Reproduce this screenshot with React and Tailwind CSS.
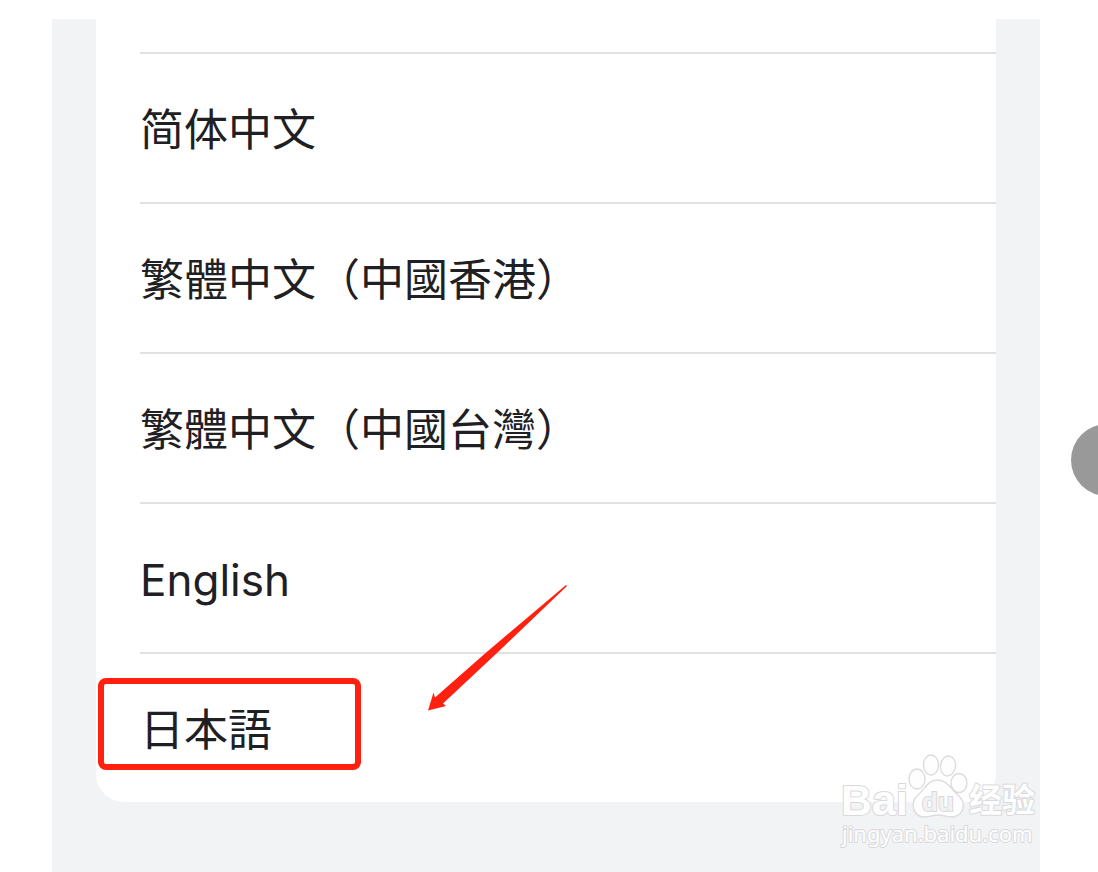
import React, { useState } from 'react';

const LANGUAGES = [
  { code: 'zh-CN', label: '简体中文' },
  { code: 'zh-HK', label: '繁體中文（中國香港）' },
  { code: 'zh-TW', label: '繁體中文（中國台灣）' },
  { code: 'en', label: 'English' },
  { code: 'ja', label: '日本語' },
];

function Arrow() {
  return (
    <svg
      className="absolute left-[288px] -top-[69px] w-[140px] h-[128px] pointer-events-none"
      viewBox="0 0 140 128"
      aria-hidden="true"
    >
      <path
        d="M138 0 L139 1 L70 67 L15 118.5 L18 121 L0 125.5 L5.5 107.5 L7 112.5 L57 68.5 Z"
        fill="#ff2010"
      />
    </svg>
  );
}

function Watermark() {
  return (
    <svg
      className="absolute right-0 bottom-[20px] w-[200px] h-[100px] pointer-events-none"
      viewBox="0 0 200 100"
      role="img"
      aria-label="Baidu 经验"
    >
      <g fill="#fefefe" stroke="#dcdcde" strokeWidth="1.4" strokeLinejoin="round">
        {/* Toes */}
        <ellipse cx="77" cy="27" rx="8" ry="10" />
        <ellipse cx="91" cy="13" rx="7.5" ry="10" />
        <ellipse cx="108" cy="14" rx="7.5" ry="10" transform="rotate(8 108 14)" />
        <ellipse cx="119" cy="31" rx="8" ry="9.5" />
        {/* Pad */}
        <path d="M97 28 C88 28 85 37 78 43 C70 50 72 64 84 65 C90 65 93 63 98 63 C103 63 106 65 112 65 C124 64 127 51 118 43 C110 36 107 28 97 28 Z" />
      </g>
      <g
        fill="#fefefe"
        stroke="#d9d9db"
        strokeWidth="2"
        paintOrder="stroke"
        strokeLinejoin="round"
        className="font-['Liberation_Sans','Noto_Sans_CJK_SC',sans-serif]"
      >
        <text x="1" y="63" fontSize="43" fontWeight="700">Bai</text>
        <text x="82" y="59" fontSize="26" fontWeight="700" fill="#f2f2f4">du</text>
        <text x="129" y="60" fontSize="33" fontWeight="700">经验</text>
        <text x="2" y="90" fontSize="22" className="font-['Noto_Sans',sans-serif]">
          jingyan.baidu.com
        </text>
      </g>
    </svg>
  );
}

export default function App() {
  const [selected, setSelected] = useState('ja');

  return (
    <div className="relative flex min-h-screen overflow-hidden bg-white pt-[19px] pl-[52px] pr-[58px] font-['Inter','Noto_Sans_CJK_SC',sans-serif] text-[#1f2024]">
      <main className="relative flex-1 bg-[#f2f3f5] px-11">
        <ul className="rounded-b-[28px] bg-white pt-[33px] pl-11">
          {LANGUAGES.map(({ code, label }) => (
            <li key={code} className="relative border-t-2 border-[#e1e1e2]">
              <button
                type="button"
                lang={code}
                aria-pressed={selected === code}
                onClick={() => setSelected(code)}
                className="flex h-[148px] w-full items-center pt-1 text-left text-[44px] leading-[64px]"
              >
                {label}
              </button>
              {selected === code && (
                <>
                  <div className="absolute -left-[42px] top-6 h-[92px] w-[263px] rounded-lg border-6 border-[#ff2010] pointer-events-none" />
                  <Arrow />
                </>
              )}
            </li>
          ))}
        </ul>
        <Watermark />
      </main>

      <button
        type="button"
        aria-label="Next"
        className="absolute -right-[45px] top-[424px] size-[72px] rounded-full bg-[#999999]"
      />
    </div>
  );
}
